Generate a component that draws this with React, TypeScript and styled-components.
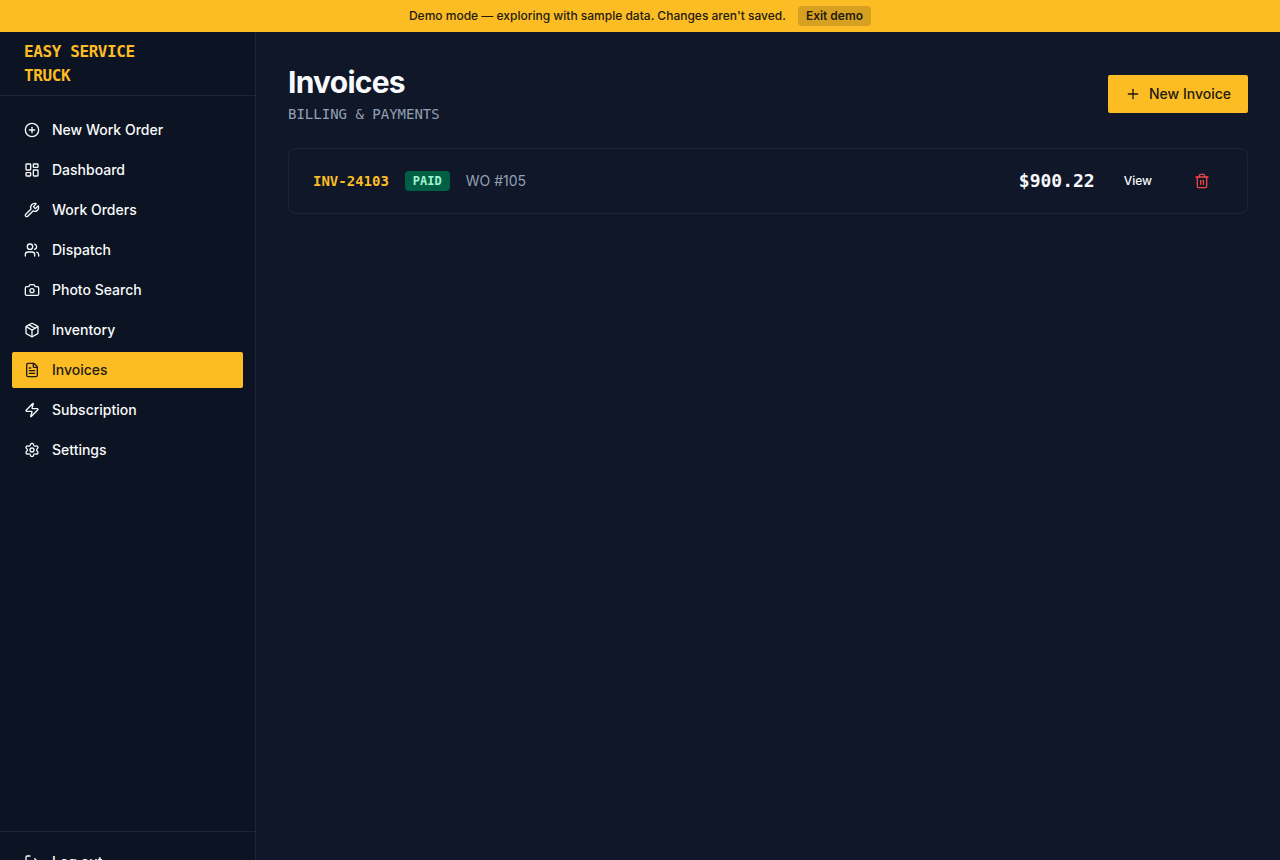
import React from "react";
import styled, { createGlobalStyle } from "styled-components";
import { CirclePlus, LayoutDashboard, Wrench, Users, Camera, Package, FileText, Zap, Settings, LogOut, Plus, Trash2 } from "lucide-react";

const Global = createGlobalStyle`
  *, *::before, *::after { box-sizing: border-box; }
  body { margin: 0; background: #0f1729; color: #f8fafc; font-family: Inter, sans-serif; line-height: 1.5; overflow: hidden; }
  button { font-family: inherit; border: 0; cursor: pointer; }
`;
const mono = `"DejaVu Sans Mono", monospace`;

const Page = styled.div`
  height: 860px;
  overflow: hidden;
`;
const Banner = styled.div`
  height: 32px;
  display: flex;
  align-items: center;
  justify-content: center;
  gap: 12px;
  background: #fbbd23;
  color: #231a10;
  font-size: 12px;
  line-height: 16px;
  font-weight: 500;
`;
const ExitButton = styled.button`
  height: 20px;
  padding: 2px 8px;
  border-radius: 4px;
  background: rgba(35, 26, 16, 0.17);
  color: #231a10;
  font-size: 12px;
  line-height: 16px;
  font-weight: 600;
`;
const Shell = styled.div`
  display: flex;
  height: 860px;
`;
const Sidebar = styled.aside`
  width: 256px;
  flex: none;
  display: flex;
  flex-direction: column;
  background: #0c1322;
  border-right: 1px solid #1e2536;
`;
const Brand = styled.div`
  height: 64px;
  display: flex;
  align-items: center;
  padding: 0 72px 0 24px;
  border-bottom: 1px solid #1e2536;
  color: #fbbd23;
  font-family: ${mono};
  font-size: 16px;
  line-height: 24px;
  font-weight: 700;
  letter-spacing: -0.4px;
`;
const Nav = styled.nav`
  flex: 1;
  display: flex;
  flex-direction: column;
  gap: 4px;
  padding: 16px 12px;
`;
const NavItem = styled.a<{ $active?: boolean }>`
  height: 36px;
  display: flex;
  align-items: center;
  gap: 12px;
  padding: 0 12px;
  border-radius: 2px;
  font-size: 14px;
  line-height: 20px;
  font-weight: 500;
  background: ${(p) => (p.$active ? "#fbbd23" : "transparent")};
  color: ${(p) => (p.$active ? "#231a10" : "#f8fafc")};
`;
const SidebarFooter = styled.div`
  height: 61px;
  padding: 12px;
  border-top: 1px solid #1e2536;
`;
const Main = styled.main`
  flex: 1;
  padding: 32px;
`;
const Header = styled.header`
  display: flex;
  align-items: center;
  justify-content: space-between;
  margin-bottom: 24px;
`;
const Title = styled.h1`
  margin: 0;
  font-size: 30px;
  line-height: 36px;
  font-weight: 700;
  letter-spacing: -0.75px;
`;
const Subtitle = styled.p`
  margin: 4px 0 0;
  color: #94a0b4;
  font-family: ${mono};
  font-size: 14px;
  line-height: 20px;
`;
const PrimaryButton = styled.button`
  width: 140px;
  height: 38px;
  display: flex;
  align-items: center;
  justify-content: center;
  gap: 8px;
  border-radius: 2px;
  background: #fbbd23;
  color: #231a10;
  font-size: 14px;
  line-height: 20px;
  font-weight: 500;
`;
const InvoiceRow = styled.div`
  height: 66px;
  display: flex;
  align-items: center;
  justify-content: space-between;
  padding: 0 24px;
  border: 1px solid #1e2536;
  border-radius: 8px;
`;
const Group = styled.div`
  display: flex;
  align-items: center;
  gap: 16px;
`;
const InvoiceNumber = styled.span`
  color: #fbbd23;
  font-family: ${mono};
  font-size: 14px;
  line-height: 20px;
  font-weight: 700;
`;
const Status = styled.span`
  padding: 2px 8px;
  border-radius: 4px;
  background: #006045;
  color: #a4f4cf;
  font-family: ${mono};
  font-size: 12px;
  line-height: 16px;
  font-weight: 700;
`;
const OrderRef = styled.span`
  color: #94a0b4;
  font-size: 14px;
  line-height: 20px;
`;
const Amount = styled.span`
  font-family: ${mono};
  font-size: 18px;
  line-height: 28px;
  font-weight: 700;
`;
const GhostButton = styled.button`
  height: 32px;
  display: flex;
  align-items: center;
  padding: 0 13px;
  background: transparent;
  color: #f8fafc;
  font-size: 12px;
  line-height: 16px;
  font-weight: 500;
`;
const DeleteButton = styled(GhostButton)`
  color: #ef4343;
`;

const items = [
  ["New Work Order", CirclePlus],
  ["Dashboard", LayoutDashboard],
  ["Work Orders", Wrench],
  ["Dispatch", Users],
  ["Photo Search", Camera],
  ["Inventory", Package],
  ["Invoices", FileText],
  ["Subscription", Zap],
  ["Settings", Settings],
] as const;

export default function App() {
  return (
    <Page>
      <Global />
      <Banner>
        <span>Demo mode — exploring with sample data. Changes aren't saved.</span>
        <ExitButton>Exit demo</ExitButton>
      </Banner>
      <Shell>
        <Sidebar>
          <Brand>EASY SERVICE TRUCK</Brand>
          <Nav>
            {items.map(([label, Icon]) => (
              <NavItem key={label} $active={label === "Invoices"}>
                <Icon size={16} />
                {label}
              </NavItem>
            ))}
          </Nav>
          <SidebarFooter>
            <NavItem><LogOut size={16} />Log out</NavItem>
          </SidebarFooter>
        </Sidebar>
        <Main>
          <Header>
            <div>
              <Title>Invoices</Title>
              <Subtitle>BILLING &amp; PAYMENTS</Subtitle>
            </div>
            <PrimaryButton><Plus size={16} />New Invoice</PrimaryButton>
          </Header>
          <InvoiceRow>
            <Group>
              <InvoiceNumber>INV-24103</InvoiceNumber>
              <Status>PAID</Status>
              <OrderRef>WO #105</OrderRef>
            </Group>
            <Group>
              <Amount>$900.22</Amount>
              <GhostButton>View</GhostButton>
              <DeleteButton aria-label="Delete invoice"><Trash2 size={16} /></DeleteButton>
            </Group>
          </InvoiceRow>
        </Main>
      </Shell>
    </Page>
  );
}
